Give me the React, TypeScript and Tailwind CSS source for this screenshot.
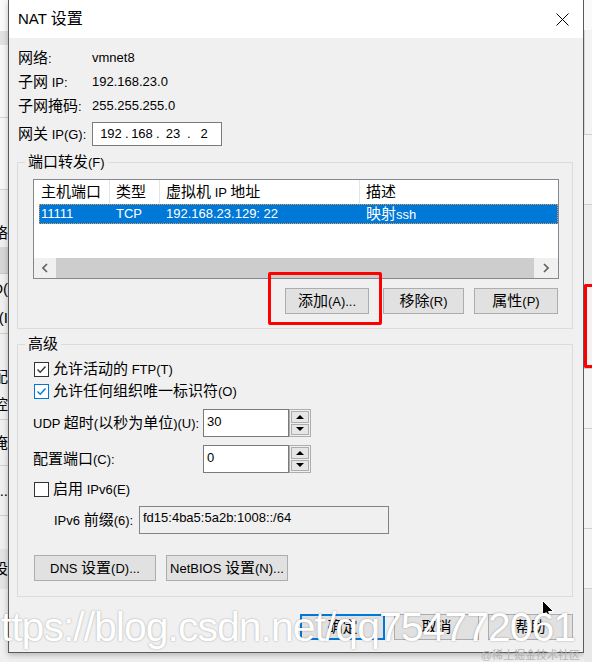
import React from 'react';

const CJK = /([\u2e80-\u9fff\u3000-\u303f\uff00-\uffef]+)/;

// CJK runs are a bit larger than the latin text in this dialog font
function T({ s, lg }: { s: string; lg?: boolean }) {
  return (
    <span className="whitespace-pre">
      {s.split(CJK).map((part, i) =>
        CJK.test(part) ? (
          <span key={i} className={lg ? 'text-[16px]' : 'text-[15px]'}>
            {part}
          </span>
        ) : (
          <React.Fragment key={i}>{part}</React.Fragment>
        ),
      )}
    </span>
  );
}

function Btn({ label, className = '', def }: { label: string; className?: string; def?: boolean }) {
  return (
    <div
      className={`flex h-[26px] shrink-0 items-center justify-center bg-[#e1e1e1] ${
        def ? 'border-2 border-[#0078d7]' : 'border border-[#adadad]'
      } ${className}`}
    >
      <T s={label} />
    </div>
  );
}

function Check({ checked, blue }: { checked?: boolean; blue?: boolean }) {
  const c = blue ? '#0078d7' : '#333333';
  return (
    <span className={`flex h-[15px] w-[15px] shrink-0 items-center justify-center border bg-white ${blue ? 'border-[#0078d7]' : 'border-[#333333]'}`}>
      {checked && (
        <svg width="13" height="13" viewBox="0 0 13 13">
          <path d="M2.5 6.5 L5.2 9.2 L10.5 3.5" fill="none" stroke={c} strokeWidth="1.4" />
        </svg>
      )}
    </span>
  );
}

function Spin({ value }: { value: string }) {
  return (
    <div className="flex h-[28px]">
      <div className="w-[86px] border border-[#7a7a7a] bg-white pl-[3px] pt-[4px]">{value}</div>
      <div className="flex w-[22px] flex-col gap-[1px] border border-[#adadad] bg-[#f0f0f0] p-[1px]">
        <div className="flex flex-1 items-center justify-center border border-[#adadad] bg-[#e6e6e6]">
          <svg width="8" height="4" viewBox="0 0 8 4">
            <path d="M0 4 H8 L4 0 Z" fill="#000" />
          </svg>
        </div>
        <div className="flex flex-1 items-center justify-center border border-[#adadad] bg-[#e6e6e6]">
          <svg width="8" height="4" viewBox="0 0 8 4">
            <path d="M0 0 H8 L4 4 Z" fill="#000" />
          </svg>
        </div>
      </div>
    </div>
  );
}

function Chevron({ right }: { right?: boolean }) {
  return (
    <svg width="6" height="10" viewBox="0 0 6 10">
      <path d={right ? 'M1 1 L5 5 L1 9' : 'M5 1 L1 5 L5 9'} fill="none" stroke="#606060" strokeWidth="1.6" />
    </svg>
  );
}

function LeftStrip() {
  return (
    <div className="flex w-[8px] shrink-0 flex-col overflow-hidden bg-[#f0f0f0] text-[15px]">
      <div className="h-[31px] bg-[#fafafa]" />
      <div className="h-[14px] bg-[#e2e2e2]" />
      <div className="h-[72px] bg-[#f7f7f7]" />
      <div className="h-[72px] border-t border-[#d4d4d4] bg-[#f7f7f7]" />
      <div className="flex h-[58px] items-end justify-end border-t border-[#d4d4d4] pb-[6px]">络</div>
      <div className="h-[26px] bg-[#d6d6d6]" />
      <div className="flex h-[30px] items-center justify-end border-t border-[#c8c8c8]">D(</div>
      <div className="flex h-[30px] items-center justify-end">(I</div>
      <div className="h-[30px] border-t border-[#d0d0d0]" />
      <div className="flex h-[28px] items-center justify-end">配</div>
      <div className="flex h-[28px] items-center justify-end">控</div>
      <div className="flex h-[46px] items-center justify-end border-t border-[#d0d0d0]">俺</div>
      <div className="flex h-[50px] items-center justify-end border-t border-[#d0d0d0]">n..</div>
      <div className="h-[34px] border-t border-[#d0d0d0]" />
      <div className="flex h-[40px] items-center justify-end bg-[#e4e4e4]">设</div>
    </div>
  );
}

function RightStrip() {
  return (
    <div className="flex w-[8px] shrink-0 flex-col overflow-hidden bg-[#f3f3f3]">
      <div className="h-[30px] bg-[#fafafa]" />
      <div className="h-[104px] border-l border-[#d8d8d8]" />
      <div className="h-[70px] border-t border-[#cfcfcf]" />
      <div className="h-[80px] border-t border-[#cfcfcf] bg-[#ececec]" />
      <div className="h-[84px] rounded-l-[2px] border-y-[3px] border-l-[3px] border-[#ff0000]" />
      <div className="h-[60px] border-t border-[#cfcfcf]" />
      <div className="h-[100px] border-t border-[#cfcfcf]" />
      <div className="h-[60px] border-t border-[#cfcfcf]" />
      <div className="flex-1 border-t border-[#cfcfcf] bg-[#e8e8e8]" />
    </div>
  );
}

export default function App() {
  return (
    <div className="relative flex h-[662px] w-[592px] overflow-hidden bg-[#efefef] font-['Liberation_Sans','Noto_Sans_CJK_SC',sans-serif] text-[13px] leading-[16px] text-black">
      <LeftStrip />

      <div className="flex h-[653px] w-[576px] shrink-0 flex-col border-x border-b border-[#5a5a5a] bg-[#f0f0f0] shadow-[0_2px_6px_rgba(0,0,0,0.25)]">
        {/* title bar */}
        <div className="flex h-[38px] shrink-0 items-center justify-between bg-white pl-[9px] pr-[14px]">
          <span className="text-[15px]">
            <T s="NAT 设置" lg />
          </span>
          <svg width="13" height="13" viewBox="0 0 13 13">
            <path d="M0.5 0.5 L12.5 12.5 M12.5 0.5 L0.5 12.5" stroke="#000" strokeWidth="1" />
          </svg>
        </div>

        <div className="flex flex-1 flex-col pl-[8px]">
          <div className="ml-[1px] mt-[8px] flex h-[24px] items-center">
            <span className="w-[74px]"><T s="网络:" /></span>
            <span>vmnet8</span>
          </div>
          <div className="ml-[1px] flex h-[24px] items-center">
            <span className="w-[74px]"><T s="子网 IP:" /></span>
            <span>192.168.23.0</span>
          </div>
          <div className="ml-[1px] flex h-[24px] items-center">
            <span className="w-[74px]"><T s="子网掩码:" /></span>
            <span>255.255.255.0</span>
          </div>
          <div className="ml-[1px] mt-[4px] flex h-[24px] items-center">
            <span className="w-[74px]"><T s="网关 IP(G):" /></span>
            <div className="flex h-[24px] w-[130px] items-center border border-[#7a7a7a] bg-white pl-[4px]">
              <span className="w-[28px] text-center">192</span>
              <span className="w-[3px]">.</span>
              <span className="w-[28px] text-center">168</span>
              <span className="w-[3px]">.</span>
              <span className="w-[28px] text-center">23</span>
              <span className="w-[3px]">.</span>
              <span className="w-[28px] text-center">2</span>
            </div>
          </div>

          {/* port forwarding */}
          <fieldset className="mt-[8px] w-[556px] border border-[#dcdcdc] pb-[14px]">
            <legend className="ml-[7px] px-[3px] leading-[16px]">
              <T s="端口转发(F)" />
            </legend>
            <div className="ml-[15px] mt-[8px] flex h-[100px] w-[526px] flex-col border border-[#828790] bg-white">
              <div className="flex h-[24px] shrink-0">
                <div className="flex w-[76px] items-center border-r border-[#e5e5e5] pl-[7px]"><T s="主机端口" /></div>
                <div className="flex w-[50px] items-center border-r border-[#e5e5e5] pl-[6px]"><T s="类型" /></div>
                <div className="flex w-[200px] items-center border-r border-[#e5e5e5] pl-[6px]"><T s="虚拟机 IP 地址" /></div>
                <div className="flex flex-1 items-center pl-[6px]"><T s="描述" /></div>
              </div>
              <div className="ml-[5px] flex h-[20px] shrink-0 items-center bg-[#0078d7] text-white outline-1 -outline-offset-1 outline-dotted outline-[#e89a4c]">
                <div className="w-[71px] pl-[2px]">11111</div>
                <div className="w-[50px] pl-[6px]">TCP</div>
                <div className="w-[200px] pl-[6px]">192.168.23.129: 22</div>
                <div className="flex-1 pl-[6px]"><T s="映射ssh" /></div>
              </div>
              <div className="flex-1" />
              <div className="flex h-[20px] shrink-0 bg-[#f0f0f0]">
                <div className="flex w-[22px] items-center justify-center"><Chevron /></div>
                <div className="flex-1 bg-[#cdcdcd]" />
                <div className="flex w-[24px] items-center justify-center"><Chevron right /></div>
              </div>
            </div>
            <div className="mt-[9px] flex justify-end pr-[14px]">
              <div className="relative">
                <Btn label="添加(A)..." className="w-[84px]" />
                <div className="absolute -left-[17px] -top-[16px] h-[53px] w-[114px] rounded-[2px] border-[3px] border-[#ff0000]" />
              </div>
              <Btn label="移除(R)" className="ml-[14px] w-[81px]" />
              <Btn label="属性(P)" className="ml-[10px] w-[84px]" />
            </div>
          </fieldset>

          {/* advanced */}
          <fieldset className="mt-[7px] w-[556px] border border-[#dcdcdc] pb-[15px]">
            <legend className="ml-[7px] px-[3px] leading-[16px]">
              <T s="高级" />
            </legend>
            <div className="ml-[16px] mt-[5px] flex h-[22px] items-center gap-[4px]">
              <Check checked />
              <T s="允许活动的 FTP(T)" />
            </div>
            <div className="ml-[16px] flex h-[22px] items-center gap-[4px]">
              <Check checked blue />
              <T s="允许任何组织唯一标识符(O)" />
            </div>
            <div className="ml-[15px] mt-[7px] flex items-center">
              <span className="w-[170px]"><T s="UDP 超时(以秒为单位)(U):" /></span>
              <Spin value="30" />
            </div>
            <div className="ml-[15px] mt-[8px] flex items-center">
              <span className="w-[170px]"><T s="配置端口(C):" /></span>
              <Spin value="0" />
            </div>
            <div className="ml-[16px] mt-[5px] flex h-[22px] items-center gap-[4px]">
              <Check />
              <T s="启用 IPv6(E)" />
            </div>
            <div className="ml-[36px] mt-[6px] flex items-center">
              <span className="w-[85px]"><T s="IPv6 前缀(6):" /></span>
              <div className="h-[28px] w-[250px] border border-[#838383] bg-[#f0f0f0] pl-[3px] pt-[3px]">
                fd15:4ba5:5a2b:1008::/64
              </div>
            </div>
            <div className="ml-[16px] mt-[21px] flex gap-[10px]">
              <Btn label="DNS 设置(D)..." className="w-[122px]" />
              <Btn label="NetBIOS 设置(N)..." className="w-[122px]" />
            </div>
          </fieldset>

          <div className="mt-[17px] flex justify-end gap-[9px] pr-[10px]">
            <Btn label="确定" className="w-[85px]" def />
            <Btn label="取消" className="w-[85px]" />
            <Btn label="帮助" className="w-[85px]" />
          </div>
        </div>
      </div>

      <RightStrip />

      {/* mouse pointer */}
      <svg className="absolute left-[542px] top-[600px]" width="12" height="19" viewBox="0 0 12 19">
        <path d="M0.5 0.5 L0.5 16 L4.2 12.4 L6.8 18.2 L9 17.2 L6.5 11.5 L11.5 11.5 Z" fill="#000" stroke="#fff" strokeWidth="1" />
      </svg>

      {/* watermarks */}
      <div className="pointer-events-none absolute left-[-21px] top-[607px] whitespace-nowrap font-['Liberation_Sans',sans-serif] text-[41px] leading-[41px] tracking-[-1px] text-white [text-shadow:0_0_2px_rgba(0,0,0,0.35)]">
        https://blog.csdn.net/qq754772061
      </div>
      <div className="pointer-events-none absolute bottom-[1px] right-[12px] text-[11px] leading-[12px] text-[#b4b4b4]">
        @稀土掘金技术社区
      </div>
    </div>
  );
}
